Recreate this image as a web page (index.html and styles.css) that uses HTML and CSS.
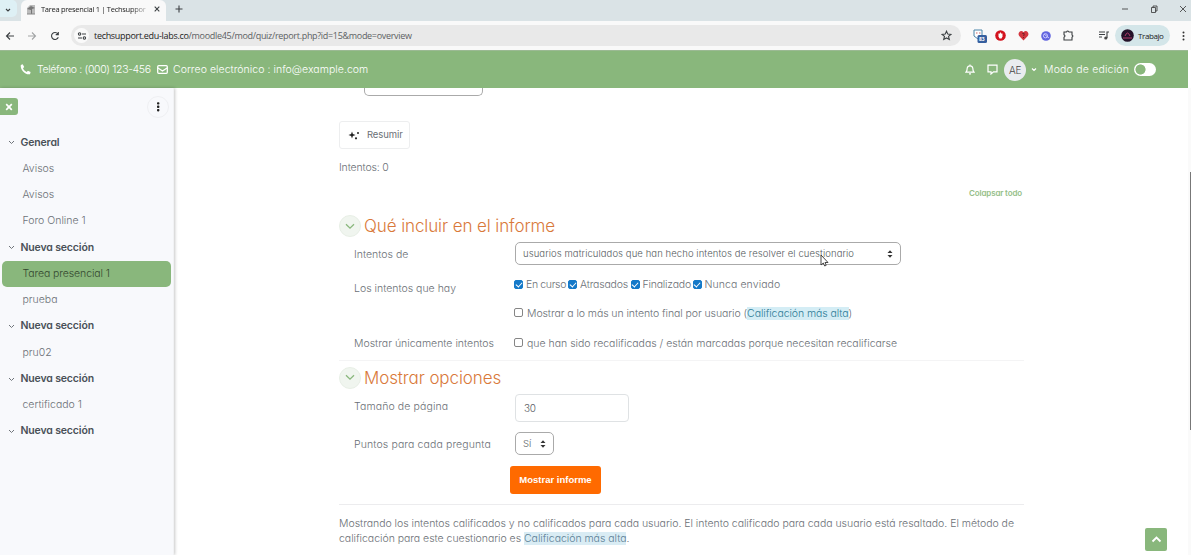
FILE: index.html
```html
<!DOCTYPE html>
<html lang="es">
<head>
<meta charset="utf-8">
<title>Tarea presencial 1 | Techsupport</title>
<link rel="stylesheet" href="styles.css">
</head>
<body>
<header class="browser">
  <div class="tabs">
    <div class="tab-search"><svg width="8" height="8" viewBox="0 0 8 8"><path class="ln" d="M2 3l2 2 2-2"/></svg></div>
    <div class="tab">
      <svg width="10" height="11" viewBox="0 0 10 11"><path d="M1 4l3-3h5v9H1z" fill="#bbb"/><path d="M1 5l4-3 4 2-3 1v5H5V6z" fill="#777"/><path d="M1 10h8" stroke="#888"/></svg>
      <span class="tab-title">Tarea presencial 1 | Techsuppor</span>
      <svg width="8" height="8" viewBox="0 0 8 8"><path class="ln" d="M1.700 1.700l4.600 4.600M6.300 1.700L1.700 6.300"/></svg>
    </div>
    <svg class="plus" width="8" height="8" viewBox="0 0 8 8"><path class="ln" d="M4 .5v7M.5 4h7"/></svg>
    <div class="win">
      <svg width="8" height="8" viewBox="0 0 8 8"><path class="thin" d="M1 4h6"/></svg>
      <svg width="8" height="8" viewBox="0 0 8 8"><path class="thin" d="M1.500 2.500h4v5h-4zM3 2.500V1h4v5H5.500"/></svg>
      <svg width="8" height="8" viewBox="0 0 8 8"><path class="thin" d="M1 1l6 6M7 1L1 7"/></svg>
    </div>
  </div>
  <div class="toolbar">
    <svg class="nav-ic" width="10" height="10" viewBox="0 0 10 10"><path class="ln" d="M9 5H1.500M5 1.500L1.500 5 5 8.500"/></svg>
    <svg class="nav-ic dim" width="10" height="10" viewBox="0 0 10 10"><path class="ln" d="M1 5h7.500M5 1.500L8.500 5 5 8.500"/></svg>
    <svg class="nav-ic reload" width="10" height="10" viewBox="0 0 10 10"><path class="ln" d="M8.300 6.200A3.500 3.500 0 1 1 7.800 2.800M8.300 1v2.600H5.700"/></svg>
    <div class="url">
      <span class="site"><svg width="10" height="8" viewBox="0 0 10 8"><path class="ln" d="M5 2h4M1 6h4"/><circle class="ln" cx="2.600" cy="2" r="1.200"/><circle class="ln" cx="7.400" cy="6" r="1.200"/></svg></span>
      <span class="address"><b>techsupport.edu-labs.co</b>/moodle45/mod/quiz/report.php?id=15&amp;mode=overview</span>
      <svg class="star" width="11" height="11" viewBox="0 0 11 11"><path class="ln" d="M5.500 1.200l1.300 2.900 3.100.3-2.400 2 .8 3.100-2.800-1.600-2.800 1.600.8-3.100-2.400-2 3.100-.3z"/></svg>
    </div>
    <div class="exts">
      <svg width="14" height="14" viewBox="0 0 14 14"><path d="M1 1h8v6L5 10 1 7z" fill="#fff" stroke="#4b84a8"/><path d="M3 4h1.500M6 4h1.500" stroke="#c66"/><rect x="4.500" y="6" width="9.500" height="8" rx="1.500" fill="#365f9f"/><text x="6" y="12.300" class="badge">83</text></svg>
      <svg width="11" height="11" viewBox="0 0 11 11"><circle cx="5.500" cy="5.500" r="5.300" fill="#d3131e"/><path d="M3.500 3.500h4v3l-1 2h-2l-1-2z" fill="#fff"/><path d="M5.500 2.500v2" stroke="#fff"/></svg>
      <svg width="11" height="11" viewBox="0 0 11 11"><path d="M5.500 10.500L1.200 6C-1 3 2.800-1 5.500 2.200 8.200-1 12 3 9.800 6z" fill="#d33740"/><path d="M4.300 3.500q2.600-1 1.800 1.500L5.500 6M5.500 7v1" fill="none" stroke="#702025"/></svg>
      <svg width="10" height="10" viewBox="0 0 10 10"><circle cx="5" cy="5" r="4.800" fill="#6366df"/><circle cx="4.500" cy="4.800" r="2.100" fill="none" stroke="#c9c9ff"/><path d="M3 3l5 4" stroke="#c9c9ff"/></svg>
      <svg width="11" height="11" viewBox="0 0 11 11"><path class="ln" d="M1 2h2.500q1-2 2.500 0h3v3q1.800 1 0 2.200V10H1V7.200q2-1.200 0-2.400z"/></svg>
      <i class="sep"></i>
      <svg width="10" height="9" viewBox="0 0 10 9"><path class="ln" d="M0 1h6M0 3.500h6M0 6h3M8 7V1h2"/><circle cx="6.800" cy="7" r="1.600" fill="#474747"/></svg>
    </div>
    <div class="profile"><svg width="13" height="13" viewBox="0 0 13 13"><circle cx="6.500" cy="6.500" r="6.300" fill="#241229"/><path d="M2 9h9M4 7q2.500-6 5 0" fill="none" stroke="#b23a6b"/></svg><span>Trabajo</span></div>
    <svg class="kebab" width="3" height="10" viewBox="0 0 3 10"><circle cx="1.500" cy="1.500" r="1"/><circle cx="1.500" cy="5" r="1"/><circle cx="1.500" cy="8.500" r="1"/></svg>
  </div>
</header>

<nav class="navbar">
  <svg width="11" height="11" viewBox="0 0 11 11"><path d="M2.700.3L.8.900C0 5.500 5 11 10 10.200l.6-2.200-2.700-1.200-1.200 1.300C5 7.300 3.700 6 3 4.300l1.200-1.200z" fill="#fff"/></svg>
  <span class="tel">Teléfono : (000) 123-456</span>
  <svg width="11" height="9" viewBox="0 0 11 9"><rect x=".7" y=".7" width="9.600" height="7.600" rx="1" fill="none" stroke="#fff" stroke-width="1.300"/><path d="M1 3l4.500 3L10 3" fill="none" stroke="#fff" stroke-width="1.300"/></svg>
  <span class="mail">Correo electrónico : info@example.com</span>
  <div class="user">
    <svg width="10" height="11" viewBox="0 0 10 11"><path d="M1 8.200q1.200-1.500 1.200-3.900Q2.500 1.800 5 1.800T7.800 4.300Q7.800 6.700 9 8.200zM5 .5v1M4 9.800h2" class="wh"/></svg>
    <svg width="11" height="11" viewBox="0 0 11 11"><path d="M1 1.200h9v6.600H6.500L4 10V7.800H1z" class="wh"/></svg>
    <span class="avatar">AE</span>
    <svg width="6" height="5" viewBox="0 0 6 5"><path d="M1 1.500l2 2 2-2" class="wh"/></svg>
    <span class="mode">Modo de edición</span>
    <span class="switch"></span>
  </div>
</nav>

<div class="page">
  <aside class="drawer">
    <div class="drawer-top">
      <span class="close"><svg width="8" height="8" viewBox="0 0 8 8"><path d="M1.200 1.200l5.600 5.600M6.800 1.200L1.200 6.800" stroke="#fff" stroke-width="1.700"/></svg></span>
      <span class="more"><svg width="3" height="10" viewBox="0 0 3 10"><rect width="2.400" height="2.400" y=".2" rx=".8"/><rect width="2.400" height="2.400" y="3.600" rx=".8"/><rect width="2.400" height="2.400" y="7" rx=".8"/></svg></span>
    </div>
    <ul class="index">
      <li class="sec"><svg width="7" height="5" viewBox="0 0 7 5"><path d="M1 1l2.500 2.500L6 1"/></svg><span>General</span></li>
      <li>Avisos</li>
      <li>Avisos</li>
      <li>Foro Online 1</li>
      <li class="sec"><svg width="7" height="5" viewBox="0 0 7 5"><path d="M1 1l2.500 2.500L6 1"/></svg><span>Nueva sección</span></li>
      <li class="active">Tarea presencial 1</li>
      <li>prueba</li>
      <li class="sec"><svg width="7" height="5" viewBox="0 0 7 5"><path d="M1 1l2.500 2.500L6 1"/></svg><span>Nueva sección</span></li>
      <li>pru02</li>
      <li class="sec"><svg width="7" height="5" viewBox="0 0 7 5"><path d="M1 1l2.500 2.500L6 1"/></svg><span>Nueva sección</span></li>
      <li>certificado 1</li>
      <li class="sec"><svg width="7" height="5" viewBox="0 0 7 5"><path d="M1 1l2.500 2.500L6 1"/></svg><span>Nueva sección</span></li>
    </ul>
  </aside>

  <main class="content">
    <div class="cut-select"></div>
    <div class="summarise"><svg width="12" height="10" viewBox="0 0 12 10"><path d="M4 1.500l.9 2.600L7.500 5l-2.600.9L4 8.500l-.9-2.600L.5 5l2.600-.9z"/><circle cx="10" cy="3" r="1"/><circle cx="8" cy="8.300" r="1.100"/></svg><span>Resumir</span></div>
    <p class="attempts">Intentos: 0</p>
    <p class="collapse">Colapsar todo</p>
    <h3><i><svg width="10" height="7" viewBox="0 0 10 7"><path d="M1 1.200l4 4 4-4"/></svg></i><span>Qué incluir en el informe</span></h3>
    <div class="row r1"><label>Intentos de</label><div class="select wide"><span>usuarios matriculados que han hecho intentos de resolver el cuestionario</span><svg width="6" height="8" viewBox="0 0 6 8"><path d="M.5 3L3 .3 5.500 3zM.5 5L3 7.700 5.500 5z"/></svg></div></div>
    <div class="row r2"><label>Los intentos que hay</label>
      <div class="checks states"><i class="box on"></i><span class="c1">En curso</span><i class="box on"></i><span class="c2">Atrasados</span><i class="box on"></i><span class="c3">Finalizado</span><i class="box on"></i><span class="c4">Nunca enviado</span></div></div>
    <div class="row r3"><label></label><div class="checks"><i class="box"></i><span class="c5">Mostrar a lo más un intento final por usuario (<mark>Calificación más alta</mark>)</span></div></div>
    <div class="row r4"><label>Mostrar únicamente intentos</label><div class="checks"><i class="box"></i><span>que han sido recalificadas / están marcadas porque necesitan recalificarse</span></div></div>
    <h3 class="second"><i><svg width="10" height="7" viewBox="0 0 10 7"><path d="M1 1.200l4 4 4-4"/></svg></i><span>Mostrar opciones</span></h3>
    <div class="row r5"><label>Tamaño de página</label><div class="input">30</div></div>
    <div class="row r6"><label>Puntos para cada pregunta</label><div class="select small"><span>Sí</span><svg width="6" height="8" viewBox="0 0 6 8"><path d="M.5 3L3 .3 5.500 3zM.5 5L3 7.700 5.500 5z"/></svg></div></div>
    <div class="submit">Mostrar informe</div>
    <p class="note"><span>Mostrando los intentos calificados y no calificados para cada usuario. El intento calificado para cada usuario está resaltado. El método de</span><br><span>calificación para este cuestionario es <mark>Calificación más alta</mark>.</span></p>
  </main>
  <div class="scroll"><div class="thumb"></div></div>
</div>
<div class="to-top"><svg width="11" height="7" viewBox="0 0 11 7"><path d="M1.500 5.500l4-4 4 4" fill="none" stroke="#fff" stroke-width="1.800"/></svg></div>
<svg class="cursor" width="9" height="13" viewBox="0 0 9 13"><path d="M1 1v10l2.300-2 1.400 3 1.500-.7L5 8.500h3z" fill="#fff" stroke="#333" stroke-width=".9"/></svg>
</body>
</html>
```
FILE: styles.css
```css
* { box-sizing: border-box; }
body { margin: 0; width: 1191px; height: 555px; overflow: hidden; background: #fff; color: #6b7076; font: 300 11px/16px Inter, "Open Sans", sans-serif; font-feature-settings: "cv11"; }
p, h3, ul { margin: 0; padding: 0; }
svg { display: block; flex: none; }
span, label { white-space: nowrap; }
.ln { fill: none; stroke: #3c4043; stroke-width: 1.100; }
.thin { fill: none; stroke: #333; stroke-width: .8; }
.wh { fill: none; stroke: #fff; stroke-width: 1.200; }

.browser { height: 50px; background: #f9f9f9; font-family: "Open Sans", sans-serif; font-weight: 400; }
.tabs { height: 21px; background: #dae3e6; display: flex; align-items: center; }
.tab-search { width: 17px; height: 17px; margin-top: -4px; background: #def0f5; border-radius: 0 5px 5px 0; display: flex; align-items: center; padding-left: 4px; padding-top: 3px; }
.tab { width: 145px; height: 21px; margin-left: 4px; padding: 0 6px 3px 5px; background: #f9f9f9; border-radius: 6px 6px 0 0; display: flex; align-items: center; }
.tab-title { width: 107px; margin: 0 7px 0 5px; font-size: 7.500px; letter-spacing: -.28px; color: #222; -webkit-mask-image: linear-gradient(90deg, #000 85%, rgba(0,0,0,.25)); }
.plus { margin: -4px 0 0 9px; }
.win { margin: -4px 4px 0 auto; display: flex; gap: 21px; }
.toolbar { height: 29px; display: flex; align-items: center; }
.nav-ic { margin-left: 5px; margin-right: 7px; }
.reload { margin-left: 6px; margin-right: 6px; }
.dim { opacity: .45; }
.url { width: 890px; height: 21px; margin-left: 5px; padding: 0 9px 0 3px; border-radius: 11px; background: #e9e9e9; display: flex; align-items: center; }
.site { width: 15px; height: 15px; border-radius: 50%; background: #fafafa; display: flex; align-items: center; justify-content: center; }
.address { margin-left: 5px; font-size: 9px; color: #5c5f63; letter-spacing: -.31px; }
.address b { font-weight: 400; color: #222; }
.star { margin-left: auto; }
.exts { width: 135px; margin-left: 12px; display: flex; align-items: center; gap: 12px; }
.exts svg:nth-child(2) { margin-left: -4px; }
.exts .sep { margin-left: 3px; margin-right: -2px; }
.badge { font: 700 5px "Open Sans", sans-serif; fill: #fff; }
.sep { width: 1px; height: 10px; background: #c8dadd; }
.profile { width: 55px; height: 21px; margin-left: 7px; padding-left: 6px; border-radius: 11px; background: #d4e6e9; display: flex; align-items: center; gap: 4px; font-size: 8px; letter-spacing: -.4px; color: #222; }
.profile svg { margin-right: 0; }
.kebab { margin-left: 12px; fill: #333; }

.navbar { width: 1188px; height: 38px; padding-left: 20px; background: #89b77c; border-top: 1px solid #9bb993; color: #fff; display: flex; align-items: center; font-size: 10.500px; }
.tel { width: 115px; margin: 0 5px 0 6px; letter-spacing: -.34px; }
.mail { margin-left: 5px; letter-spacing: .04px; }
.user { margin-left: auto; margin-right: 32px; display: flex; align-items: center; }
.user svg + svg { margin-left: 12px; }
.avatar { width: 22px; height: 22px; margin: 0 5px 0 6px; border-radius: 50%; background: #e9ecef; color: #444; text-align: center; line-height: 22px; font-size: 10px; letter-spacing: -.3px; }
.mode { width: 85px; margin: 0 5px 0 7px; letter-spacing: .2px; }
.switch { width: 22px; height: 13px; border-radius: 7px; background: radial-gradient(circle at 6.500px 6.500px, #89b77c 4.700px, #fff 5.400px); }

.page { height: 467px; display: flex; }
.drawer { width: 174px; background: #f8f9fc; border-right: 1px solid #f1f2f4; box-shadow: 1px 0 3px rgba(0,0,0,.22); flex: none; }
.drawer-top { height: 41.700px; padding: 8px 4px 0 0; display: flex; justify-content: space-between; }
.close { width: 19px; height: 17px; margin-top: 2px; margin-left: -1px; background: #89b77c; border-radius: 0 3px 3px 0; display: flex; align-items: center; justify-content: center; }
.more { width: 22px; height: 22px; border: 1px solid #eff0f3; border-radius: 50%; display: flex; align-items: center; justify-content: center; fill: #222; }
.index { list-style: none; padding: 0 2px 0 2px; }
.index li { height: 26.270px; line-height: 26.600px; padding-left: 20.500px; font-size: 10.500px; letter-spacing: 0; }
.index .sec { display: flex; align-items: center; padding-left: 6px; font-weight: 600; letter-spacing: -.15px; color: #495057; }
.sec svg { margin-right: 5.500px; fill: none; stroke: #6f747a; }
.index .active { background: #89b77c; border-radius: 5px; color: #34482f; letter-spacing: -.1px; }

.content { width: 685px; margin-left: 165px; }
.cut-select { width: 119px; height: 8px; margin-left: 25px; border: 1px solid #aaa; border-top: 0; border-radius: 0 0 5px 5px; }
.summarise { width: 71px; height: 28px; margin-top: 25px; padding-left: 8px; border: 1px solid #edeeef; border-radius: 3px; display: flex; align-items: center; gap: 7px; font-size: 9.500px; font-weight: 400; letter-spacing: -.1px; fill: #222; }
.attempts { margin-top: 10px; padding-top: .6px; height: 16px; letter-spacing: -.15px; font-size: 10.500px; }
.collapse { margin-top: 10px; padding-right: 2px; text-align: right; font-size: 8px; font-weight: 600; color: #95be88; letter-spacing: -.15px; }
h3 { height: 24px; margin-top: 13px; display: flex; align-items: center; color: #d9793a; font-size: 17px; font-weight: 300; letter-spacing: -.1px; }
h3 i { width: 22px; height: 22px; margin-right: 3px; border-radius: 50%; background: #f0f5ef; border: 1px solid #e8efe6; display: flex; align-items: center; justify-content: center; fill: none; stroke: #89b77c; stroke-width: 1.300; }
.row { display: grid; grid-template-columns: 161px 1fr; padding-left: 15px; align-items: center; font-size: 10.500px; }
.r1 { height: 23px; margin-top: 4px; }
.r1 label { padding-top: 2px; }
.r2 { height: 30px; margin-top: 5px; }
.r2 label { padding-top: 7px; }
.r3 { height: 27px; }
.r4 { height: 33px; }
.r5 { height: 28px; }
.r5 label { padding-bottom: 3px; letter-spacing: .12px; }
.r6 { height: 23px; margin-top: 10px; }
.r6 label { letter-spacing: .12px; padding-top: 2px; }
.select { height: 23px; padding: 0 7px; border: 1px solid #aaa; border-radius: 5px; display: flex; align-items: center; justify-content: space-between; color: #555b60; fill: #333; }
.wide { width: 386px; font-size: 9.500px; letter-spacing: .08px; }
.small { width: 39px; font-size: 9.500px; }
.input { width: 114px; height: 28px; padding-left: 8px; border: 1px solid #dfe2e4; border-radius: 4px; line-height: 27px; color: #5b6065; font-size: 10px; letter-spacing: -.4px; }
.checks { display: flex; align-items: center; margin-left: -1px; }
.box { width: 9px; height: 9px; border: 1px solid #858585; border-radius: 2px; background: #fff; margin-right: 4px; margin-top: -2px; flex: none; }
.on { border-color: #1479c9; background: #1479c9; margin-right: 3px; display: flex; justify-content: center; }
.on::after { content: ""; width: 3px; height: 5px; border: solid #fff; border-width: 0 1px 1px 0; transform: rotate(42deg); }
.states { letter-spacing: -.2px; }
.c1 { width: 42px; letter-spacing: -.35px; } .c2 { width: 50.500px; } .c3 { width: 50px; }
.c4 { letter-spacing: .08px; }
.c5 { letter-spacing: -.075px; }
mark { background: #d4edf5; color: #2d7c96; }
.second { height: 34px; margin-top: 0; border-top: 1px solid #f4f4f5; }
.submit { width: 91px; height: 28px; margin: 11px 0 10px 171px; border-radius: 3px; background: #ff6a00; color: #fff; font: 700 9.500px/28px "Liberation Sans", sans-serif; text-align: center; letter-spacing: 0; }
.note { padding-top: 11px; border-top: 1px solid #ececee; font-size: 10.500px; line-height: 15px; letter-spacing: -.025px; }
.note mark { background: #d9ecf4; color: #5b7f94; }
.scroll { width: 3px; margin-left: auto; background: #fafafa; display: flex; justify-content: flex-end; }
.thumb { width: 1px; height: 258px; margin-top: 84px; background: #777; }
.to-top { position: absolute; left: 1145px; top: 528px; width: 22px; height: 23px; border-radius: 2px; background: #89b77c; display: flex; align-items: center; justify-content: center; }
.cursor { position: absolute; left: 820px; top: 254px; }
```
